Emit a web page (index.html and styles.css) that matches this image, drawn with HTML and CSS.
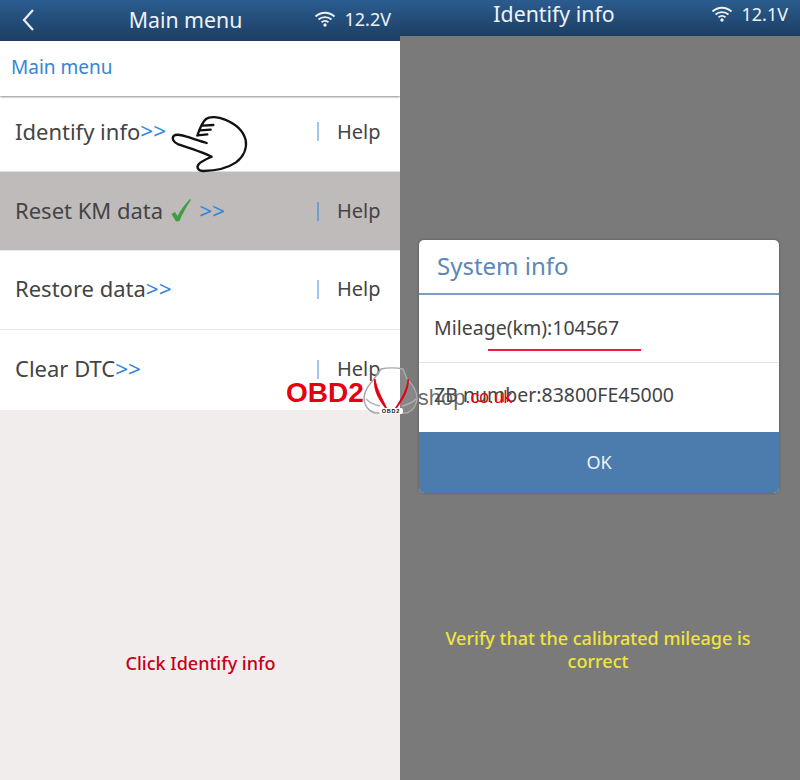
FILE: index.html
```html
<!DOCTYPE html>
<html lang="en">
<head>
  <meta charset="UTF-8">
  <title>Main menu</title>
  <link rel="stylesheet" href="styles.css">
</head>
<body>

  <div class="screen">
    <div class="header">
      <svg class="back" width="14" height="24" viewBox="0 0 14 24"><path d="M12 2 L3 12 L12 22" fill="none" stroke="#e8edf2" stroke-width="2.200"/></svg>
      <div class="header-title">Main menu</div>
      <div class="status">
        <svg class="wifi" width="22" height="16" viewBox="0 0 22 16"><path d="M1.5 5.5 C7 0.5 15 0.5 20.500 5.500 M4.500 8.500 C8 5.300 14 5.300 17.500 8.500 M7.500 11.300 C9.500 9.700 12.500 9.700 14.500 11.300" fill="none" stroke="#eef2f6" stroke-width="1.800"/><circle cx="11" cy="14" r="1.700" fill="#eef2f6"/></svg>
        <span>12.2V</span>
      </div>
    </div>
    <div class="crumb">Main menu</div>

    <div class="menu">
      <div class="menu-row first">
        <div class="menu-label">Identify info<span class="arrows">&gt;&gt;</span></div>
        <div class="help">Help</div>
      </div>
      <div class="menu-row active">
        <div class="menu-label">Reset KM data
          <svg class="tick" width="20" height="24" viewBox="0 0 20 24"><path d="M0.500 16 L4 14 L6.500 18 C9.500 12 14 6 19 1 L20 2 C15.500 8 11.500 16 8.500 23 L5 23.500 Z" fill="#3f9d42"/></svg>
          <span class="arrows">&gt;&gt;</span>
        </div>
        <div class="help">Help</div>
      </div>
      <div class="menu-row">
        <div class="menu-label">Restore data<span class="arrows">&gt;&gt;</span></div>
        <div class="help">Help</div>
      </div>
      <div class="menu-row last">
        <div class="menu-label">Clear DTC<span class="arrows">&gt;&gt;</span></div>
        <div class="help">Help</div>
      </div>
    </div>

    <div class="note note-red">Click Identify info</div>

    <!-- pointing hand -->
    <svg class="hand" width="100" height="70" viewBox="0 0 300 210">
      <path d="M112 92 C120 68 128 50 138 42 C150 33 175 36 195 44 C225 56 250 78 257 105 C262 130 250 155 228 172 C205 188 165 197 130 198 C115 198 108 188 116 178 C124 168 140 162 155 155 C130 142 85 128 55 118 C40 112 34 100 42 92 C50 86 65 90 80 95 C100 101 120 108 140 114 M128 62 L160 60 M120 76 L152 74 M112 91 L142 88" fill="none" stroke="#111" stroke-width="7" stroke-linecap="round" stroke-linejoin="round"/>
    </svg>
  </div>

  <div class="screen dark">
    <div class="header short">
      <div class="header-title">Identify info</div>
      <div class="status">
        <svg class="wifi" width="22" height="16" viewBox="0 0 22 16"><path d="M1.5 5.5 C7 0.5 15 0.5 20.500 5.500 M4.500 8.500 C8 5.300 14 5.300 17.500 8.500 M7.500 11.300 C9.500 9.700 12.500 9.700 14.500 11.300" fill="none" stroke="#eef2f6" stroke-width="1.800"/><circle cx="11" cy="14" r="1.700" fill="#eef2f6"/></svg>
        <span>12.1V</span>
      </div>
    </div>

    <div class="dialog">
      <div class="dialog-title">System info</div>
      <div class="dialog-row">
        Mileage(km):104567
        <div class="red-line"></div>
      </div>
      <div class="dialog-row">ZB number:83800FE45000</div>
      <div class="dialog-ok">OK</div>
    </div>

    <div class="note note-yellow">Verify that the calibrated mileage is<br>correct</div>
  </div>

  <!-- watermark -->
  <div class="watermark">
    <span class="wm-obd">OBD2</span>
    <svg class="wm-car" width="56" height="50" viewBox="0 0 56 50">
      <path d="M18 2 C24 0.500 34 0.500 40 2 L44 12 C50 18 54 24 54 31 C54 38 50 44 44 46 L12 46 C5 44 1 38 1 31 C1 24 6 18 11 12 Z" fill="rgba(255,255,255,0.1)" stroke="#a8a8a8" stroke-width="1.500"/>
      <path d="M3 32 C7 36 12 38 17 39 M53 32 C49 36 44 38 39 39" fill="none" stroke="#b0b0b0" stroke-width="1.500"/>
      <path d="M11 12 C10 24 16 33 22 41 L24 41 C20 32 14 22 12.500 12 Z M44.500 12 C44 22 38 32 32 41 L34 41 C40 33 46 24 46 12 Z" fill="#e60012"/>
      <rect x="16" y="41" width="24" height="6" rx="2" fill="#fff"/>
      <text x="28" y="46" class="wm-tiny" text-anchor="middle">OBD2</text>
    </svg>
    <span class="wm-shop">shop</span><span class="wm-uk">.co.uk</span>
  </div>

</body>
</html>
```

FILE: styles.css
```css
* {
  box-sizing: border-box;
  margin: 0;
  padding: 0;
}

body {
  display: flex;
  position: relative;
  width: 800px;
  height: 780px;
  overflow: hidden;
  font-family: "Noto Sans", sans-serif;
  color: #444;
}

.screen {
  position: relative;
  display: flex;
  flex-direction: column;
  width: 400px;
  height: 780px;
  background-color: #f1eded;
}

.screen.dark {
  background-color: #7a7a7a;
}

/* Header */
.header {
  position: relative;
  display: flex;
  align-items: center;
  justify-content: center;
  flex-shrink: 0;
  height: 41px;
  background: linear-gradient(to bottom, #2b5c8f, #1c3e63);
  color: #eef2f6;
  font-size: 21.300px;
}

.header.short {
  height: 36px;
}

.header-title {
  margin-left: -29px;
  padding-bottom: 2px;
}

.header.short .header-title {
  margin-left: -92px;
  padding-bottom: 8px;
  line-height: 26px;
}

.back {
  position: absolute;
  left: 21px;
  top: 8px;
}

.status {
  position: absolute;
  right: 9px;
  top: 7px;
  display: flex;
  align-items: center;
  gap: 8px;
  font-size: 18px;
}

.header.short .status {
  top: 2px;
  right: 12px;
}

.crumb {
  position: relative;
  height: 55px;
  padding: 14px 11px;
  background-color: #fff;
  box-shadow: 0 1px 2px rgba(0,0,0,0.45);
  color: #3585d6;
  font-size: 19px;
  line-height: 24px;
}

/* Menu rows */
.menu {
  background-color: #fff;
}

.menu-row {
  display: flex;
  align-items: center;
  justify-content: space-between;
  height: 79px;
  padding: 0 21px 4px 15px;
  border-bottom: 1px solid #e8e8e8;
  font-size: 22px;
}

.menu-row.first {
  height: 76px;
  padding-bottom: 6px;
  border-bottom: 1px solid #e0e0e0;
}

.menu-row.active {
  height: 79px;
  background-color: #bfbbbb;
  padding-bottom: 2px;
}

.menu-row.last {
  height: 80px;
  border-bottom: 0;
}

.menu-label {
  display: flex;
  align-items: center;
}

.arrows {
  color: #2f86dc;
  font-size: 22.500px;
}

.tick {
  margin: 0 8px;
}

.help {
  width: 62px;
  margin-top: 2px;
  padding-left: 20px;
  font-size: 20px;
  line-height: 20px;
  background: linear-gradient(#9cc8ee, #9cc8ee) no-repeat 0 center / 2px 19px;
  white-space: nowrap;
}

.active .help {
  background-image: linear-gradient(#6c9fd2, #6c9fd2);
}

.hand {
  position: absolute;
  left: 160px;
  top: 105px;
}

/* Captions */
.note {
  position: absolute;
  left: 0;
  right: 0;
  text-align: center;
  font-size: 18px;
  line-height: 23px;
  font-weight: 500;
}

.note-red {
  top: 652px;
  padding-left: 1px;
  color: #c4001a;
}

.note-yellow {
  top: 627px;
  padding-right: 4px;
  color: #f1e53a;
}

/* Dialog */
.dialog {
  position: absolute;
  left: 19px;
  top: 240px;
  width: 360px;
  height: 253px;
  border-radius: 5px;
  overflow: hidden;
  background-color: #fff;
  box-shadow: 0 0 3px rgba(0,0,0,0.3);
  display: flex;
  flex-direction: column;
}

.dialog-title {
  height: 55px;
  padding: 9px 18px;
  border-bottom: 2px solid #7f9fc0;
  color: #5b88ba;
  font-size: 24px;
  line-height: 34px;
}

.dialog-row {
  position: relative;
  height: 68px;
  padding: 0 15px;
  border-bottom: 1px solid #e4e4e4;
  font-size: 19.500px;
  line-height: 66px;
}

.dialog-row + .dialog-row {
  height: 69px;
  border-bottom: 0;
  line-height: 64px;
}

.red-line {
  position: absolute;
  left: 69px;
  top: 54px;
  width: 153px;
  height: 2px;
  background-color: #ee1c3c;
}

.dialog-ok {
  flex: 1;
  background-color: #4c7bad;
  color: #eef2f6;
  text-align: center;
  font-size: 18px;
  line-height: 60px;
}

/* Watermark */
.watermark {
  position: absolute;
  left: 286px;
  top: 367px;
  display: flex;
  align-items: center;
  height: 50px;
  white-space: nowrap;
  font-family: "Liberation Sans", sans-serif;
}

.wm-obd {
  color: #e60012;
  font-size: 28px;
  font-weight: bold;
  margin-top: 2px;
}

.wm-car {
  margin-left: -1px;
  margin-right: -1px;
}

.wm-tiny {
  font-size: 5.500px;
  font-weight: bold;
  letter-spacing: 0.800px;
  fill: #111;
}

.wm-shop {
  color: rgba(80,80,80,0.85);
  font-size: 22px;
  margin-top: 11px;
}

.wm-uk {
  color: #e60012;
  font-size: 17.500px;
  margin-top: 11px;
}
```
